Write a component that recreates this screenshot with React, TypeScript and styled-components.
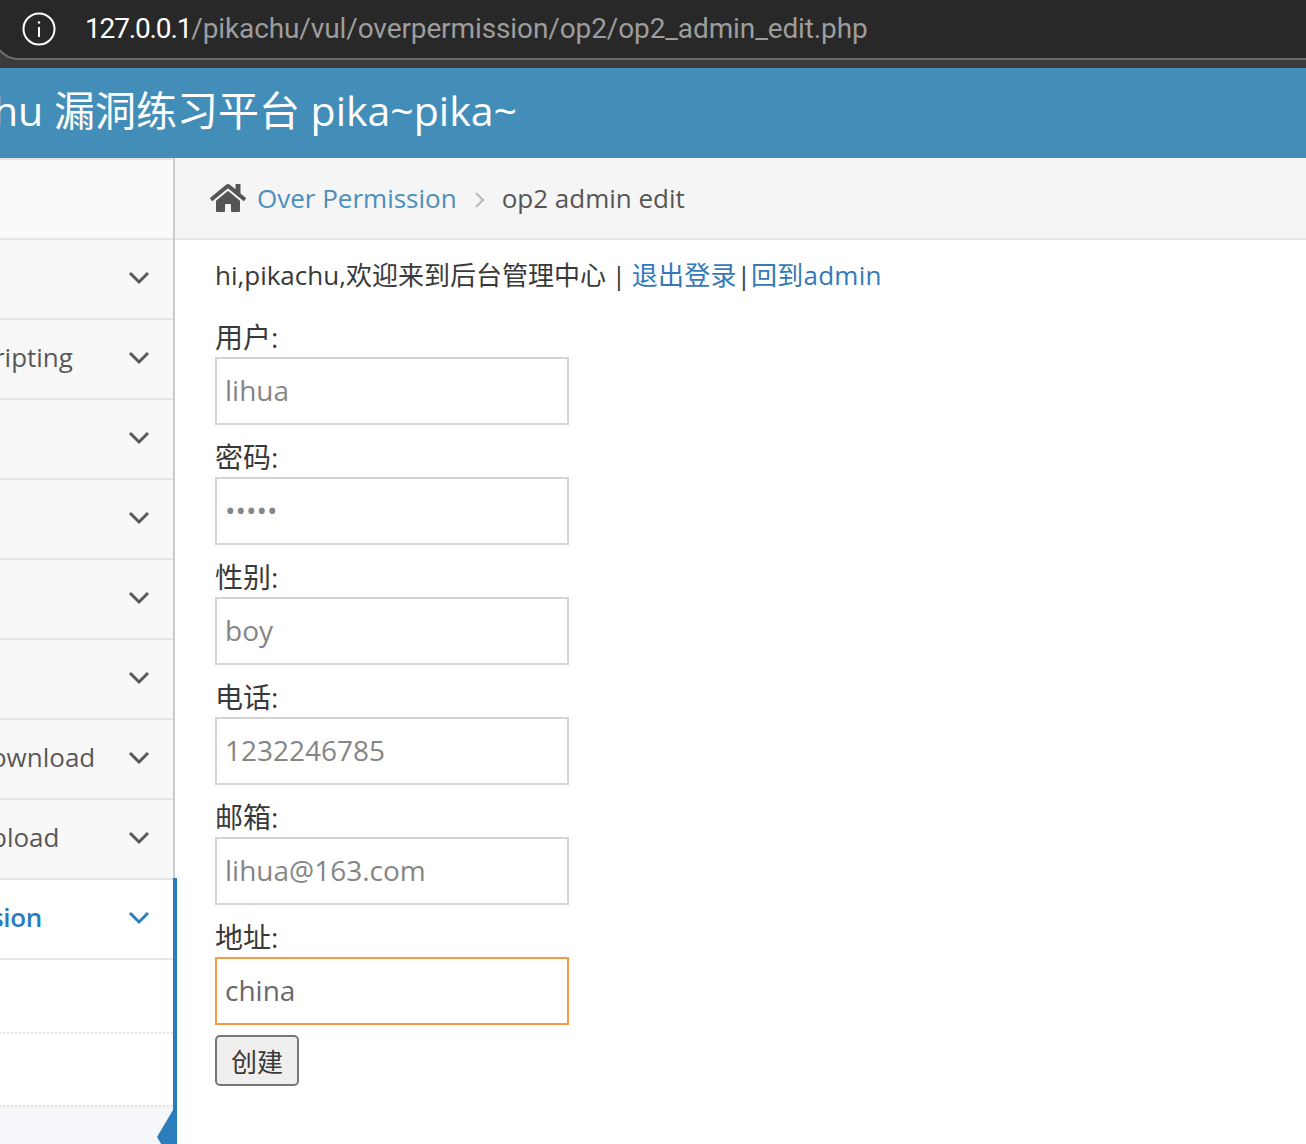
import React from "react";
import styled, { createGlobalStyle } from "styled-components";
import { FaHome } from "react-icons/fa";

const Global = createGlobalStyle`
  html, body { margin: 0; padding: 0; background: #fff; }
  body { font-family: "Open Sans", "Noto Sans CJK SC", sans-serif; color: #393939; overflow: hidden; }
`;

const Viewport = styled.div`
  width: 1306px;
  height: 1144px;
  overflow: hidden;
  display: flex;
  flex-direction: column;
`;

const Chrome = styled.div`
  height: 68px;
  flex: none;
  background: #3b3b3b;
  display: flex;
  align-items: flex-start;
`;

const AddressBar = styled.div`
  box-sizing: border-box;
  height: 60px;
  width: 1320px;
  margin-left: -6px;
  background: #282828;
  border: 2px solid #6c6c6c;
  border-top: none;
  border-right: none;
  border-radius: 0 0 0 24px;
  display: flex;
  align-items: center;
  padding-left: 26px;
  gap: 29px;
`;

const InfoIcon = styled.svg`
  flex: none;
  width: 34px;
  height: 34px;
  fill: none;
  stroke: #fff;
  stroke-width: 2;
`;

const Url = styled.div`
  font-family: "Roboto", sans-serif;
  font-size: 28px;
  letter-spacing: -0.11px;
  color: #9d9d9d;
  white-space: nowrap;
  margin-top: -1px;
`;

const Host = styled.span`
  color: #fff;
  letter-spacing: -1.15px;
`;

const Navbar = styled.div`
  height: 90px;
  flex: none;
  background: #438eb9;
  color: #fff;
  font-size: 41px;
  line-height: 84px;
  padding-left: 8px;
  margin-left: -114px;
  white-space: nowrap;
  font-family: "Open Sans", "Noto Sans CJK SC", sans-serif;
`;

const Body = styled.div`
  flex: 1;
  display: flex;
  min-height: 0;
`;

const Sidebar = styled.div`
  position: relative;
  flex: none;
  box-sizing: border-box;
  width: 337px;
  margin-left: -162px;
  background: #f8f8f8;
  border-right: 2px solid #ccc;
  display: flex;
  flex-direction: column;
`;

const Shortcuts = styled.div`
  height: 78px;
  flex: none;
  border-top: 2px solid #e5e5e5;
  background: #fafafa;
`;

const MenuRow = styled.div<{ $active?: boolean }>`
  box-sizing: border-box;
  height: 80px;
  flex: none;
  display: flex;
  align-items: center;
  justify-content: space-between;
  padding: 0 23px 4px 2px;
  border-top: 2px solid #e5e5e5;
  background: ${(p) => (p.$active ? "#fff" : "#f8f8f8")};
  color: ${(p) => (p.$active ? "#2b7dbc" : "#585858")};
  font-size: 26px;
  font-weight: ${(p) => (p.$active ? 600 : 400)};
  letter-spacing: ${(p) => (p.$active ? "-0.3px" : "0")};
  white-space: nowrap;
`;

const Chevron = styled.svg`
  width: 22px;
  height: 14px;
  fill: none;
  stroke: currentColor;
  stroke-width: 3;
  margin-top: 2px;
`;

const SubRow = styled.div<{ $current?: boolean }>`
  box-sizing: border-box;
  height: 73px;
  flex: none;
  padding-left: 2px;
  display: flex;
  align-items: center;
  font-size: 26px;
  color: #616161;
  background: ${(p) => (p.$current ? "#f5f7fa" : "#fff")};
  &:first-child { height: 72px; }
`;

const SubGroup = styled.div`
  display: flex;
  flex-direction: column;
  flex: 1;
  border-top: 2px solid #e5e5e5;
  background: #f5f7fa;
  & > div + div { border-top: 2px dotted #e4e4e4; }
`;

const ActiveBar = styled.div`
  position: absolute;
  top: 720px;
  right: -4px;
  bottom: 0;
  width: 4px;
  background: #2b7dbc;
`;

const ActiveArrow = styled.div`
  position: absolute;
  right: 0;
  top: 952px;
  width: 16px;
  height: 54px;
  background: #2b7dbc;
  clip-path: polygon(100% 0, 0 50%, 100% 100%);
`;

const Main = styled.div`
  flex: 1;
  min-width: 0;
  display: flex;
  flex-direction: column;
  background: #fff;
`;

const Breadcrumbs = styled.div`
  box-sizing: border-box;
  height: 82px;
  flex: none;
  background: #f5f5f5;
  border-bottom: 2px solid #e5e5e5;
  display: flex;
  align-items: center;
  padding-left: 35px;
  font-size: 26px;
  color: #555;
`;

const HomeIcon = styled(FaHome)`
  width: 36px;
  height: 36px;
  margin-right: 11px;
  color: #555;
`;

const Crumb = styled.a`
  color: #4c8fbd;
  text-decoration: none;
`;

const CrumbSep = styled.svg`
  width: 10px;
  height: 16px;
  margin: 3px 17px 0 18px;
  fill: none;
  stroke: #b2b6bf;
  stroke-width: 2;
`;

const Content = styled.div`
  padding: 0 0 0 40px;
  font-size: 26px;
  color: #393939;
`;

const Greeting = styled.p`
  margin: 0;
  height: 76px;
  line-height: 70px;
  white-space: nowrap;
  word-spacing: -1px;
`;

const Link = styled.a`
  color: #337ab7;
  text-decoration: none;
  letter-spacing: 0.25px;
`;

const Form = styled.form`
  display: flex;
  flex-direction: column;
  align-items: flex-start;
`;

const Field = styled.div<{ $first?: boolean }>`
  height: ${(p) => (p.$first ? "109px" : "120px")};
  display: flex;
  flex-direction: column;
  justify-content: flex-end;
`;

const FieldLabel = styled.label`
  display: block;
  line-height: 36px;
  height: 38px;
  font-size: 28px;
  color: #393939;
`;

const Input = styled.input<{ $focused?: boolean }>`
  box-sizing: border-box;
  display: block;
  width: 354px;
  height: 68px;
  padding: 0 8px 2px;
  border: 2px solid ${(p) => (p.$focused ? "#f59942" : "#d5d5d5")};
  outline: none;
  background: #fff;
  font-family: "Open Sans", sans-serif;
  font-size: 28px;
  color: ${(p) => (p.$focused ? "#696969" : "#858585")};
`;

const Submit = styled.button`
  box-sizing: border-box;
  width: 84px;
  height: 51px;
  margin-top: 10px;
  padding: 0;
  background: #efefef;
  border: 2px solid #767676;
  border-radius: 5px;
  font-family: "Open Sans", "Noto Sans CJK SC", sans-serif;
  font-size: 26px;
  color: #393939;
`;

const Down = () => (
  <Chevron viewBox="0 0 22 14">
    <path d="M2 2 L11 11 L20 2" />
  </Chevron>
);

const menu = [
  "暴力破解",
  "Cross-Site Scripting",
  "CSRF",
  "SQL-Inject",
  "RCE",
  "File Inclusion",
  "Unsafe file download",
  "Unsafe file upload",
];

const fields = [
  { label: "用户:", value: "lihua", type: "text" },
  { label: "密码:", value: "12345", type: "password" },
  { label: "性别:", value: "boy", type: "text" },
  { label: "电话:", value: "1232246785", type: "text" },
  { label: "邮箱:", value: "lihua@163.com", type: "text" },
  { label: "地址:", value: "china", type: "text", focused: true },
];

export default function App() {
  return (
    <Viewport>
      <Global />
      <Chrome>
        <AddressBar>
          <InfoIcon viewBox="0 0 34 34">
            <circle cx="17" cy="17" r="15.5" />
            <path d="M17 15v10" />
            <circle cx="17" cy="10.5" r="1.2" fill="#fff" stroke="none" />
          </InfoIcon>
          <Url>
            <Host>127.0.0.1</Host>/pikachu/vul/overpermission/op2/op2_admin_edit.php
          </Url>
        </AddressBar>
      </Chrome>
      <Navbar>Pikachu 漏洞练习平台 pika~pika~</Navbar>
      <Body>
        <Sidebar>
          <Shortcuts />
          {menu.map((m) => (
            <MenuRow key={m}>
              <span>{m}</span>
              <Down />
            </MenuRow>
          ))}
          <MenuRow $active>
            <span>Over Permission</span>
            <Down />
          </MenuRow>
          <SubGroup>
            <SubRow>概述</SubRow>
            <SubRow>op1</SubRow>
            <SubRow $current>op2</SubRow>
          </SubGroup>
          <ActiveBar />
          <ActiveArrow />
        </Sidebar>
        <Main>
          <Breadcrumbs>
            <HomeIcon />
            <Crumb>Over Permission</Crumb>
            <CrumbSep viewBox="0 0 10 16">
              <path d="M1 1 L8 8 L1 15" />
            </CrumbSep>
            op2 admin edit
          </Breadcrumbs>
          <Content>
            <Greeting>
              hi,pikachu,欢迎来到后台管理中心 | <Link>退出登录</Link>|<Link>回到admin</Link>
            </Greeting>
            <Form onSubmit={(e) => e.preventDefault()}>
              {fields.map((f, i) => (
                <Field key={f.label} $first={i === 0}>
                  <FieldLabel>{f.label}</FieldLabel>
                  <Input type={f.type} $focused={f.focused} defaultValue={f.value} readOnly />
                </Field>
              ))}
              <Submit type="submit">创建</Submit>
            </Form>
          </Content>
        </Main>
      </Body>
    </Viewport>
  );
}
